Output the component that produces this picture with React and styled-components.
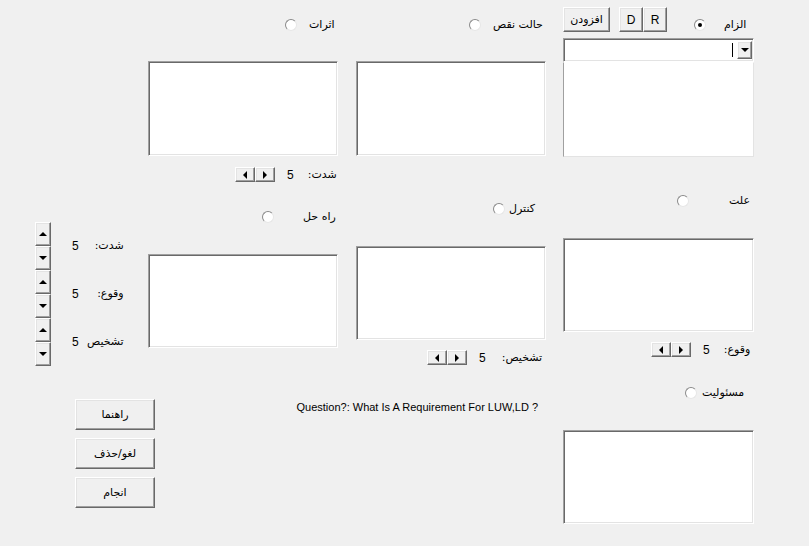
import React from "react";
import styled, { createGlobalStyle, css } from "styled-components";

const GlobalStyle = createGlobalStyle`
  * { box-sizing: border-box; }
  body {
    margin: 0;
    background: #f0f0f0;
    font-family: "DejaVu Sans", "Liberation Sans", sans-serif;
    font-size: 11px;
    color: #000;
  }
`;

const sunken = css`
  background: #fff;
  border: 1px solid;
  border-color: #a0a0a0 #fff #fff #a0a0a0;
  box-shadow: inset 1px 1px 0 #696969, inset -1px -1px 0 #e3e3e3;
`;

const raised = css`
  background: #f0f0f0;
  border: 1px solid;
  border-color: #fff #696969 #696969 #fff;
  box-shadow: inset -1px -1px 0 #a0a0a0, inset 1px 1px 0 #e3e3e3;
`;

const Form = styled.div`
  width: 809px;
  height: 546px;
  display: flex;
  padding-left: 35px;
  overflow: hidden;
`;

const Column = styled.div`
  display: flex;
  flex-direction: column;
  width: ${(p) => p.$w}px;
  margin-right: ${(p) => p.$gap || 0}px;
  flex-shrink: 0;
`;

const TextBox = styled.div`
  ${sunken};
  height: ${(p) => p.$h || 95}px;
  margin-top: ${(p) => p.$top || 0}px;
`;

const RadioRow = styled.div`
  display: flex;
  align-items: center;
  height: 12px;
  margin-top: ${(p) => p.$top || 0}px;
  margin-left: ${(p) => p.$left || 0}px;
  gap: ${(p) => p.$gap || 12}px;
`;

const RadioCircle = styled.span`
  width: 12px;
  height: 12px;
  border-radius: 50%;
  background: #fff;
  border: 1px solid;
  border-color: #8a8a8a #e6e6e6 #e6e6e6 #8a8a8a;
  display: flex;
  align-items: center;
  justify-content: center;
  flex-shrink: 0;
  &::after {
    content: "";
    width: 4px;
    height: 4px;
    border-radius: 50%;
    background: #000;
    display: ${(p) => (p.$on ? "block" : "none")};
  }
`;

const Label = styled.span`
  font-family: "DejaVu Sans", sans-serif;
  font-size: 11px;
  white-space: nowrap;
  direction: rtl;
  line-height: 12px;
`;

const Num = styled.span`
  font-family: "Liberation Sans", sans-serif;
  font-size: 12px;
  line-height: 14px;
  margin-left: ${(p) => p.$left || 0}px;
`;

const ScrollRow = styled.div`
  display: flex;
  align-items: center;
  height: 15px;
  margin-top: ${(p) => p.$top || 0}px;
  padding-left: ${(p) => p.$left || 0}px;
`;

const HScroll = styled.div`
  display: flex;
  width: 40px;
  height: 15px;
`;

const ArrowBtn = styled.div`
  ${raised};
  flex: 1;
  display: flex;
  align-items: center;
  justify-content: center;
  &::after {
    content: "";
    border-style: solid;
    ${(p) =>
      p.$dir === "left" &&
      css`border-width: 4px 4px 4px 0; border-color: transparent #000 transparent transparent;`}
    ${(p) =>
      p.$dir === "right" &&
      css`border-width: 4px 0 4px 4px; border-color: transparent transparent transparent #000;`}
    ${(p) =>
      p.$dir === "up" &&
      css`border-width: 0 4px 4px 4px; border-color: transparent transparent #000 transparent;`}
    ${(p) =>
      p.$dir === "down" &&
      css`border-width: 4px 4px 0 4px; border-color: #000 transparent transparent transparent;`}
  }
`;

const ScrollLabel = styled(Label)`
  margin-left: ${(p) => p.$left || 0}px;
`;

const SpinGroup = styled.div`
  display: flex;
  flex-direction: column;
  margin-top: 222px;
`;

const SpinRow = styled.div`
  display: flex;
  align-items: center;
  height: 48px;
`;

const VSpin = styled.div`
  display: flex;
  flex-direction: column;
  width: 16px;
  height: 48px;
`;

const SpinLabel = styled(Label)`
  width: 30px;
  margin-left: 15px;
  text-align: right;
`;

const ButtonStack = styled.div`
  display: flex;
  flex-direction: column;
  gap: 8px;
  margin-top: 33px;
  margin-left: 40px;
`;

const Button = styled.div`
  ${raised};
  width: ${(p) => p.$w || 80}px;
  height: ${(p) => p.$h || 31}px;
  margin-left: ${(p) => p.$left || 0}px;
  display: flex;
  align-items: center;
  justify-content: center;
  font-family: ${(p) => (p.$latin ? '"Liberation Sans", sans-serif' : '"DejaVu Sans", sans-serif')};
  font-size: ${(p) => (p.$latin ? 12 : 11)}px;
  flex-shrink: 0;
`;

const TopBar = styled.div`
  display: flex;
  align-items: flex-start;
  margin-top: 7px;
  height: 25px;
`;

const Combo = styled.div`
  ${sunken};
  height: 24px;
  margin-top: 6px;
  display: flex;
  align-items: center;
  justify-content: flex-end;
  padding: 2px;
`;

const Caret = styled.span`
  width: 1px;
  height: 14px;
  background: #000;
  margin-right: 4px;
`;

const DropBtn = styled(ArrowBtn)`
  flex: none;
  width: 15px;
  height: 100%;
  margin-right: -1px;
`;

const List = styled.div`
  background: #fff;
  border: 1px solid;
  border-color: #fff #e3e3e3 #e3e3e3 #a0a0a0;
  height: 95px;
`;

const Question = styled.div`
  display: flex;
  justify-content: flex-end;
  margin-top: 35px;
  padding-right: 8px;
  font-family: "Liberation Sans", sans-serif;
  font-size: 11px;
  line-height: 14px;
  white-space: nowrap;
`;

const Radio = ({ top, left, gap, on, children }) => (
  <RadioRow $top={top} $left={left} $gap={gap}>
    <RadioCircle $on={on} />
    <Label>{children}</Label>
  </RadioRow>
);

const Scroll = ({ top, left, label, labelGap }) => (
  <ScrollRow $top={top} $left={left}>
    <HScroll>
      <ArrowBtn $dir="left" />
      <ArrowBtn $dir="right" />
    </HScroll>
    <Num $left={12}>5</Num>
    <ScrollLabel $left={labelGap}>{label}</ScrollLabel>
  </ScrollRow>
);

const Spinner = ({ label }) => (
  <SpinRow>
    <VSpin>
      <ArrowBtn $dir="up" />
      <ArrowBtn $dir="down" />
    </VSpin>
    <Num $left={21}>5</Num>
    <SpinLabel>{label}</SpinLabel>
  </SpinRow>
);

export default function App() {
  return (
    <>
      <GlobalStyle />
      <Form>
        <Column $w={113}>
          <SpinGroup>
            <Spinner label="شدت:" />
            <Spinner label="وقوع:" />
            <Spinner label="تشخیص" />
          </SpinGroup>
          <ButtonStack>
            <Button>راهنما</Button>
            <Button>لغو/حذف</Button>
            <Button>انجام</Button>
          </ButtonStack>
        </Column>

        <Column $w={190} $gap={18}>
          <Radio top={19} left={137} gap={12}>اثرات</Radio>
          <TextBox $top={30} />
          <Scroll top={11} left={87} label="شدت:" labelGap={14} />
          <Radio top={29} left={114} gap={29}>راه حل</Radio>
          <TextBox $top={31} $h={94} />
        </Column>

        <Column $w={190} $gap={17}>
          <Radio top={19} left={113} gap={12}>حالت نقص</Radio>
          <TextBox $top={30} />
          <Radio top={47} left={137} gap={4}>کنترل</Radio>
          <TextBox $top={31} $h={94} />
          <Scroll top={10} left={71} label="تشخیص:" labelGap={16} />
          <Question>Question?: What Is A Requirement For LUW,LD ?</Question>
        </Column>

        <Column $w={191}>
          <TopBar>
            <Button $w={47} $h={25}>افزودن</Button>
            <Button $w={24} $h={25} $left={9} $latin>D</Button>
            <Button $w={24} $h={25} $latin>R</Button>
            <Radio top={12} left={27} gap={18} on>الزام</Radio>
          </TopBar>
          <Combo>
            <Caret />
            <DropBtn $dir="down" />
          </Combo>
          <List />
          <Radio top={38} left={114} gap={40}>علت</Radio>
          <TextBox $top={31} $h={94} />
          <Scroll top={10} left={88} label="وقوع:" labelGap={14} />
          <Radio top={30} left={122} gap={5}>مسئولیت</Radio>
          <TextBox $top={31} $h={94} />
        </Column>
      </Form>
    </>
  );
}
